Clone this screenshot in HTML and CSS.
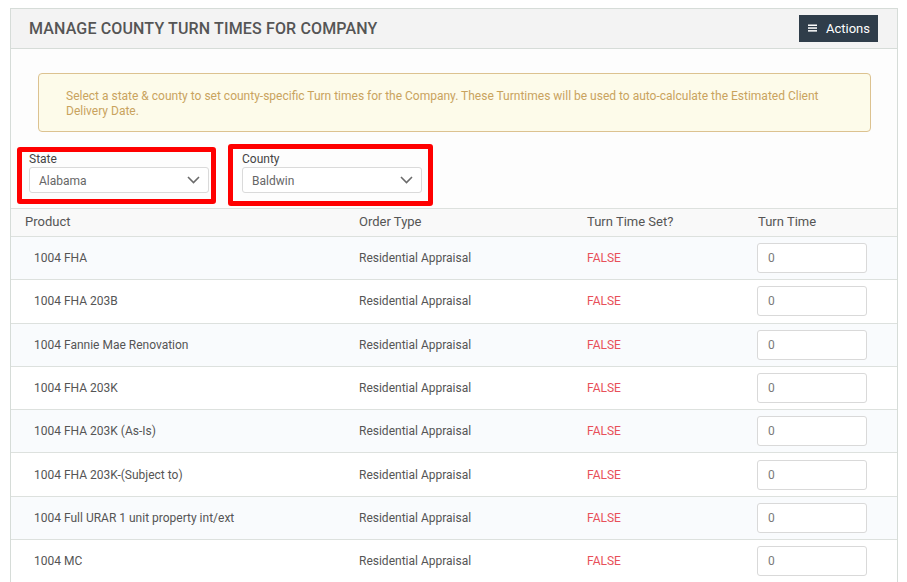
FILE: index.html
```html
<!DOCTYPE html>
<html>
<head>
<meta charset="utf-8">
<link rel="stylesheet" href="styles.css">
</head>
<body>
<div class="page">
  <div class="panel">
    <div class="panel-header">
      <h1 class="panel-title">Manage County Turn Times for Company</h1>
      <button class="btn-actions">
        <svg class="menu-icon" width="9" height="8" viewBox="0 0 9 8"><rect x="0" y="0.5" width="9" height="1.5" fill="#fff"/><rect x="0" y="3.3" width="9" height="1.5" fill="#fff"/><rect x="0" y="6.1" width="9" height="1.5" fill="#fff"/></svg>
        <span>Actions</span>
      </button>
    </div>
    <div class="panel-body">
      <div class="alert">Select a state &amp; county to set county-specific Turn times for the Company. These Turntimes will be used to auto-calculate the Estimated Client Delivery Date.</div>
      <div class="filters">
        <div class="group group-state">
          <div class="group-label">State</div>
          <div class="select">
            <span>Alabama</span>
            <svg class="chev" width="13" height="8" viewBox="0 0 13 8"><polyline points="1,1 6.5,6.5 12,1" fill="none" stroke="#6b6b6b" stroke-width="1.6"/></svg>
          </div>
        </div>
        <div class="group group-county">
          <div class="group-label">County</div>
          <div class="select">
            <span>Baldwin</span>
            <svg class="chev" width="13" height="8" viewBox="0 0 13 8"><polyline points="1,1 6.5,6.5 12,1" fill="none" stroke="#6b6b6b" stroke-width="1.6"/></svg>
          </div>
        </div>
      </div>
      <div class="table">
        <div class="row head">
          <div class="cell">Product</div>
          <div class="cell">Order Type</div>
          <div class="cell">Turn Time Set?</div>
          <div class="cell">Turn Time</div>
        </div>
        <div class="row">
          <div class="cell product">1004 FHA</div>
          <div class="cell">Residential Appraisal</div>
          <div class="cell false">FALSE</div>
          <div class="cell"><div class="input">0</div></div>
        </div>
        <div class="row">
          <div class="cell product">1004 FHA 203B</div>
          <div class="cell">Residential Appraisal</div>
          <div class="cell false">FALSE</div>
          <div class="cell"><div class="input">0</div></div>
        </div>
        <div class="row">
          <div class="cell product">1004 Fannie Mae Renovation</div>
          <div class="cell">Residential Appraisal</div>
          <div class="cell false">FALSE</div>
          <div class="cell"><div class="input">0</div></div>
        </div>
        <div class="row">
          <div class="cell product">1004 FHA 203K</div>
          <div class="cell">Residential Appraisal</div>
          <div class="cell false">FALSE</div>
          <div class="cell"><div class="input">0</div></div>
        </div>
        <div class="row">
          <div class="cell product">1004 FHA 203K (As-Is)</div>
          <div class="cell">Residential Appraisal</div>
          <div class="cell false">FALSE</div>
          <div class="cell"><div class="input">0</div></div>
        </div>
        <div class="row">
          <div class="cell product">1004 FHA 203K-(Subject to)</div>
          <div class="cell">Residential Appraisal</div>
          <div class="cell false">FALSE</div>
          <div class="cell"><div class="input">0</div></div>
        </div>
        <div class="row">
          <div class="cell product">1004 Full URAR 1 unit property int/ext</div>
          <div class="cell">Residential Appraisal</div>
          <div class="cell false">FALSE</div>
          <div class="cell"><div class="input">0</div></div>
        </div>
        <div class="row">
          <div class="cell product">1004 MC</div>
          <div class="cell">Residential Appraisal</div>
          <div class="cell false">FALSE</div>
          <div class="cell"><div class="input">0</div></div>
        </div>
      </div>
    </div>
  </div>
</div>
</body>
</html>
```

FILE: styles.css
```css
* { box-sizing: border-box; }
html, body { margin: 0; padding: 0; background: #fff; }
body { font-family: Roboto, "Open Sans", Arial, sans-serif; color: #555; }

.page { padding: 8px 9px 0 10px; }

.panel {
  border: 1px solid #d6dcd8;
  border-bottom: none;
  background: #fdfdfd;
}

.panel-header {
  height: 40px;
  background: #f3f3f3;
  border-bottom: 1px solid #d6dcd8;
  display: flex;
  align-items: center;
  justify-content: space-between;
  padding: 0 19px 0 18px;
}
.panel-title {
  margin: 0;
  font-size: 16px;
  font-weight: 500;
  text-transform: uppercase;
  color: #555;
  letter-spacing: 0.15px;
}
.btn-actions {
  height: 27px;
  width: 79px;
  background: #2f3d4a;
  border: none;
  border-radius: 0;
  color: #fff;
  font-family: Roboto, Arial, sans-serif;
  font-size: 13px;
  display: flex;
  align-items: center;
  padding: 0 0 0 9px;
  gap: 9px;
  margin-bottom: 1px;
}
.menu-icon { display: block; }

.panel-body { padding-top: 24px; }

.alert {
  margin: 0 26px 0 27px;
  height: 59px;
  background: #fdfbea;
  border: 1px solid #dcc290;
  border-radius: 4px;
  padding: 15px 27px 0 27px;
  font-size: 12px;
  line-height: 15px;
  color: #c9a35e;
}

.filters {
  display: flex;
  align-items: flex-start;
  gap: 12px;
  padding-left: 6px;
  margin-top: 12px;
}
.group {
  border: 5px solid #f00;
  border-radius: 3px;
}
.group-state { width: 199px; margin-top: 3px; padding: 0 2px 6px 7px; }
.group-county { width: 205px; padding: 3px 6px 8px 9px; }
.group-label {
  font-size: 12px;
  line-height: 15px;
  height: 15px;
  color: #444;
}
.select {
  height: 26px;
  width: 180px;
  border: 1px solid #dadada;
  border-radius: 3px;
  background: #fff;
  display: flex;
  align-items: center;
  justify-content: space-between;
  padding: 1px 8px 0 9px;
  font-size: 12px;
  color: #666;
}
.chev { display: block; margin-top: -1px; }

.table {
  margin-top: 2px;
  border-top: 1px solid #dde1de;
}
.row {
  display: grid;
  grid-template-columns: 334px 228px 171px 1fr;
  height: 43.3px;
  border-bottom: 1px solid #dde1de;
  align-items: center;
  background: #fff;
}
.row:nth-child(even) { background: #f9fbfd; }
.row.head {
  height: 28px;
  background: #f9f9f9;
  padding-bottom: 2px;
}
.cell {
  padding-left: 14px;
  font-size: 12px;
  color: #555;
}
.row.head .cell { font-size: 13px; }
.cell.product { padding-left: 23px; }
.cell.false { color: #e8505a; }
.input {
  width: 110px;
  height: 30px;
  border: 1px solid #d9d9d9;
  border-radius: 3px;
  background: #fff;
  display: flex;
  align-items: center;
  padding-left: 10px;
  font-size: 12px;
  color: #7a7a7a;
  margin-left: -1px;
}
```
